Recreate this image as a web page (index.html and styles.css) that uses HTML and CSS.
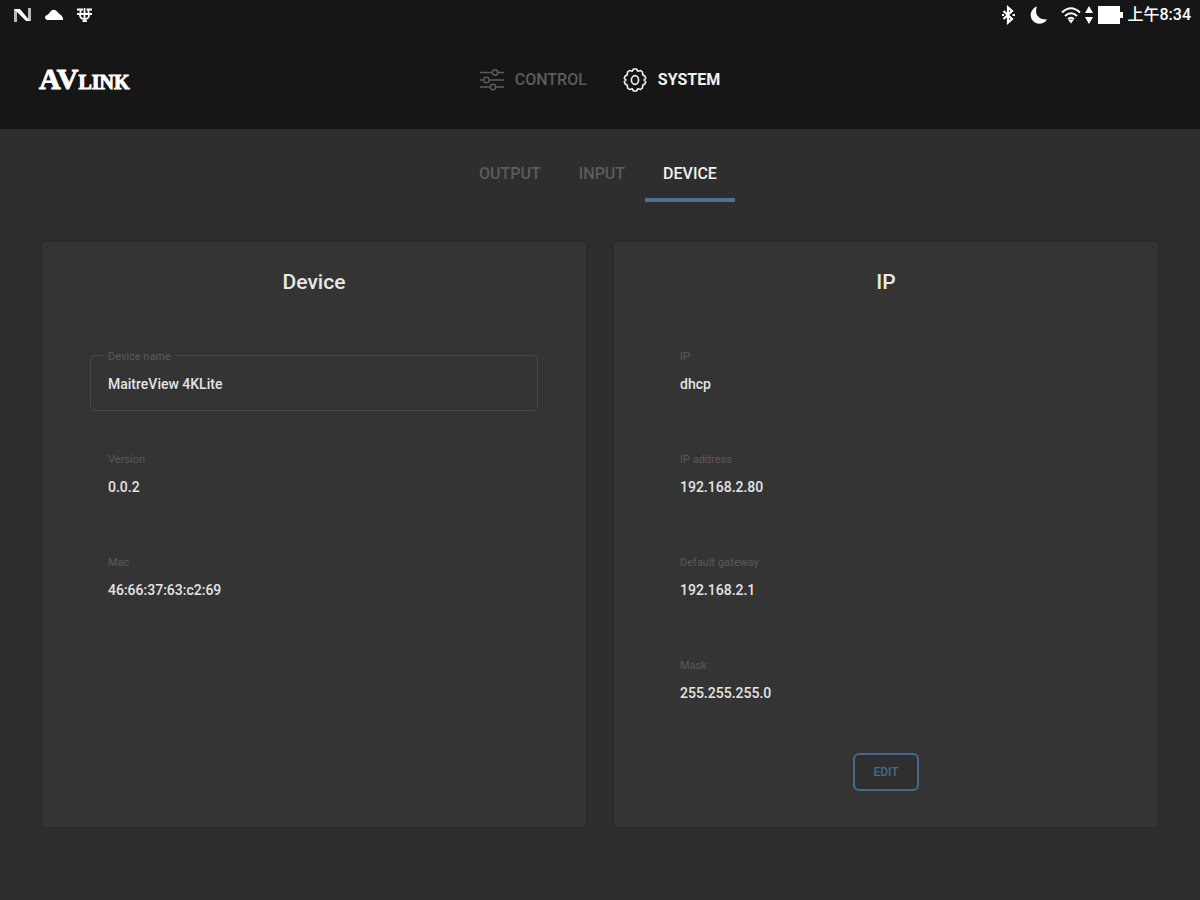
FILE: index.html
```html
<!DOCTYPE html>
<html lang="en">
<head>
<meta charset="utf-8">
<meta name="viewport" content="width=device-width, initial-scale=1">
<title>AVLink – Device</title>
<link rel="stylesheet" href="styles.css">
</head>
<body>
<header class="header">
  <div class="status">
    <div class="status-group status-left">
      <svg width="18" height="16" viewBox="0 0 18 16" fill="#fff"><path d="M0 2h3v13H0zM14 1h3v13h-3z" opacity=".7"/><path d="M1 2h5l10 12h-4L1 3z"/></svg>
      <svg width="20" height="16" viewBox="0 0 20 16" fill="#fff"><path d="M3 13a3 3 0 0 1-2-3Q1 8.500 4 7.500L7 4Q9 2 12 3.500L15.500 7q4 2.500 3.500 6z"/></svg>
      <svg width="18" height="16" viewBox="0 0 18 16" fill="none" stroke="#fff" stroke-width="1.800"><path d="M1 2.500h6M10.500 2.500H16M1 7h15M4.500 3v4M12.500 3v4M8.500 1v13M4 8q0 3.500 3.500 4M13 8q0 3.500-3.500 4M6.500 14.200h4.500"/></svg>
    </div>
    <div class="status-group status-right">
      <svg class="bluetooth" width="14" height="20" viewBox="0 0 14 20" fill="none" stroke="#fff" stroke-width="2.200"><path d="m2.500 6 8.500 8-4 3.500v-15L11 6l-8.500 8M1 10h2M11.500 10H14"/></svg>
      <svg class="moon" width="19" height="20" viewBox="0 0 19 20" fill="#fff"><path d="M8 1.500A8.800 8.800 0 1 0 18 14.500Q9.500 14.500 7.500 9 6.500 5 8 1.500z"/></svg>
      <svg class="wifi" width="20" height="18" viewBox="0 0 20 18" fill="none" stroke="#fff" stroke-width="2"><path d="M1 6.500q9-8.500 18 0M4 10q6-5.500 12 0M7 13q3-2.500 6 0"/><path d="m7 13.500 3 4 3-4z" fill="#fff" stroke="none"/></svg>
      <svg class="arrows" width="8" height="20" viewBox="0 0 8 20" fill="#fff"><path d="M4 1l4 7H0zM4 19l4-7H0z"/></svg>
      <svg class="battery" width="26" height="18" viewBox="0 0 26 18" fill="#fff"><path d="M0 0h22v6h3v6h-3v6H0z"/></svg>
      <span class="clock">上午8:34</span>
    </div>
  </div>
  <div class="bar">
    <a class="logo" href="#"><span class="logo-large">AV</span><span class="logo-small">LINK</span></a>
    <nav class="nav">
      <a class="nav-link" href="#control">
        <svg width="24" height="24" viewBox="0 0 24 24" fill="none" stroke="currentColor" stroke-width="1.500"><path d="M0 4.500h12M18 4.500h6M0 12h3.500M9.500 12H24M0 19h10M16 19h8"/><circle cx="15" cy="4.500" r="2.700"/><circle cx="6.500" cy="12" r="2.700"/><circle cx="13" cy="19" r="2.700"/></svg>
        CONTROL</a>
      <a class="nav-link is-active" href="#system">
        <svg width="24" height="24" viewBox="0 0 24 24" fill="none" stroke="currentColor" stroke-width="1.600" stroke-linejoin="round"><path d="M10.500 1h3l1.200 2.200L17.500 2.500l2 1.700.2 2.600 2.300 1.400.7 2.300L21 12l1.700 1.500-.7 2.300-2.300 1.400-.2 2.600-2 1.700-2.800-.7L13.500 23h-3l-1.200-2.200-2.800.7-2-1.700-.2-2.600L2 15.800l-.7-2.300L3 12l-1.700-1.500L2 8.200l2.300-1.400.2-2.600 2-1.700 2.800.7z"/><ellipse cx="12" cy="12" rx="3.600" ry="4.400"/></svg>
        SYSTEM</a>
    </nav>
  </div>
</header>
<main class="main">
  <nav class="tabs">
    <a class="tab" href="#output">OUTPUT</a>
    <a class="tab" href="#input">INPUT</a>
    <a class="tab is-active" href="#device">DEVICE</a>
  </nav>
  <div class="cards">
    <section class="card">
      <h2 class="card-title">Device</h2>
      <div class="fields">
        <div class="field field-outlined"><label class="label" for="device-name">Device name</label><input class="value" id="device-name" type="text" value="MaitreView 4KLite"></div>
        <div class="field"><span class="label">Version</span><span class="value">0.0.2</span></div>
        <div class="field"><span class="label">Mac</span><span class="value">46:66:37:63:c2:69</span></div>
      </div>
    </section>
    <section class="card">
      <h2 class="card-title">IP</h2>
      <div class="fields">
        <div class="field"><span class="label">IP</span><span class="value">dhcp</span></div>
        <div class="field"><span class="label">IP address</span><span class="value">192.168.2.80</span></div>
        <div class="field"><span class="label">Default gateway</span><span class="value">192.168.2.1</span></div>
        <div class="field"><span class="label">Mask</span><span class="value">255.255.255.0</span></div>
      </div>
      <button class="edit" type="button">EDIT</button>
    </section>
  </div>
</main>
</body>
</html>
```
FILE: styles.css
```css
* { box-sizing: border-box; }

body {
  margin: 0;
  min-height: 100vh;
  background: #2e2e2e;
  color: #e8e8e8;
  font-family: Roboto, "Noto Sans CJK SC", sans-serif;
  font-weight: 500;
}

a { color: inherit; text-decoration: none; }
svg { display: block; flex: none; }

.header { background: #161616; }

.status {
  display: flex;
  justify-content: space-between;
  align-items: center;
  height: 30px;
  padding: 0 9px 0 14px;
}
.status-group { display: flex; align-items: center; }
.status-left { gap: 12px; }
.moon { margin-left: 14px; }
.wifi { margin-left: 13px; }
.arrows { margin-left: 4px; }
.battery { margin-left: 5px; }
.clock { margin-left: 3px; color: #fff; font-size: 16px; line-height: 30px; }

.bar {
  display: grid;
  grid-template-columns: 1fr auto 1fr;
  align-items: center;
  height: 99px;
  padding: 0 39px;
}
.logo {
  padding-top: 3px;
  color: #fff;
  font-family: "Liberation Serif", serif;
  font-weight: 700;
  line-height: 32px;
  -webkit-text-stroke: 1px #fff;
}
.logo-large { font-size: 30px; }
.logo-small { font-size: 20px; }

.nav { display: flex; gap: 36px; }
.nav-link {
  display: flex;
  align-items: center;
  gap: 11px;
  color: #5c5c5c;
  font-size: 16px;
  line-height: 24px;
}
.nav-link.is-active { color: #f0f0f0; font-weight: 700; }

.main { padding: 16px 42px 72px; }

.tabs {
  display: flex;
  justify-content: center;
  gap: 2px;
  padding-right: 4px;
}
.tab {
  padding: 17px 18px 12px;
  border-bottom: 4px solid transparent;
  color: #5c5c5c;
  font-size: 16px;
  line-height: 24px;
}
.tab.is-active { border-color: #4d7296; color: #f0f0f0; }

.cards {
  display: grid;
  grid-template-columns: 1fr 1fr;
  gap: 28px;
  margin-top: 40px;
}
.card {
  display: flex;
  flex-direction: column;
  padding: 26px 48px 36px;
  border-radius: 3px;
  background: #343434;
  box-shadow: 0 0 2px #242424;
}
.card-title {
  margin: 0 0 59px;
  font-size: 21px;
  font-weight: 500;
  line-height: 28px;
  text-align: center;
}

.fields { display: flex; flex-direction: column; gap: 47px; }
.field {
  display: flex;
  flex-direction: column;
  align-items: flex-start;
  height: 56px;
  padding: 0 13px;
  border: 1px solid transparent;
  border-radius: 5px;
}
.field-outlined { border-color: #484848; }
.label {
  margin-top: -6px;
  padding: 0 4px;
  background: #343434;
  color: #5a5a5a;
  font-size: 11px;
  font-weight: 400;
  line-height: 14px;
}
.value {
  width: 100%;
  margin-top: 10px;
  padding: 0 4px;
  border: 0;
  outline: 0;
  background: none;
  color: #e4e4e4;
  font: 500 14px/20px Roboto, sans-serif;
}

.edit {
  align-self: center;
  height: 38px;
  margin-top: 33px;
  padding: 0 18px;
  border: 2px solid #446a8f;
  border-radius: 6px;
  background: #2f2f2f;
  color: #446a8f;
  font: 500 12px/20px Roboto, sans-serif;
}
```
